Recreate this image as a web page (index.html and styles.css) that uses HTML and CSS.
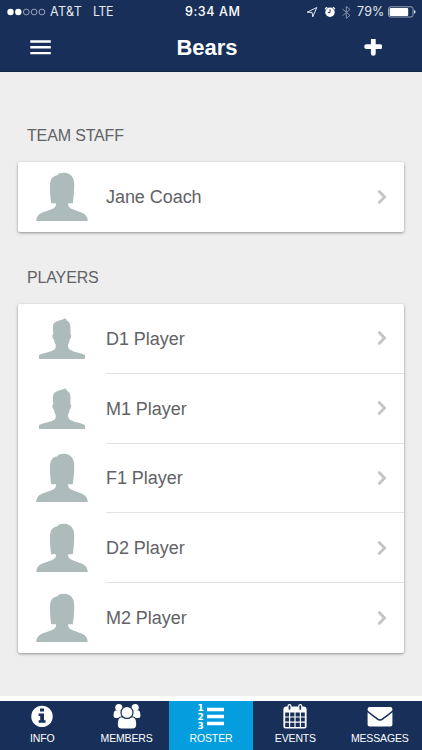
FILE: index.html
```html
<!DOCTYPE html>
<html lang="en">
<head>
<meta charset="utf-8">
<title>Bears</title>
<link rel="stylesheet" href="styles.css">
</head>
<body>
<svg class="defs" aria-hidden="true">
  <symbol id="female" viewBox="0 0 52 49"><path d="M15.2 31.2C14.6 27 14 22 14 14C14 7 16.5 4 21 3.4C22.5 1.3 25 .7 28 .8C35 1.2 38.1 5.5 38.2 12C38.4 19 37.5 26 36.8 31.2H32.1C32 35 34 36.3 37.3 37.5C43 40 51.6 40.5 51.8 49H.2C.3 40.5 9 40 15 37.5C18.2 36.3 20.2 35 20.1 31.2Z"/></symbol>
  <symbol id="male" viewBox="0 0 52 49"><path d="M17.3 20C16.5 11.6 16.8 9.7 20 7.8C23 5.8 26.5 6.3 29.5 4.3L30.8 6.6C34.3 8.3 34.9 11.6 34.4 20C35.9 20.6 35 24.9 33.6 25.7C33.2 28.1 32.6 29.4 32 30.5C31.8 33.4 32.7 35 34.5 36C38.5 38.2 44 38.7 49 41.1V45H3V41.1C8 38.7 13.8 38.2 17.8 36C19.5 35 20 33.4 19.6 30.5C18.8 29.4 18.4 28.1 18 25.7C16.5 24.9 15.8 20.6 17.3 20Z"/></symbol>
</svg>
<header class="header">
  <div class="status">
    <svg class="signal" viewBox="0 0 39 8"><g class="solid"><circle cx="3.5" cy="4" r="3.2"/><circle cx="11.3" cy="4" r="3.2"/></g><g class="ring"><circle cx="19.3" cy="4" r="2.9"/><circle cx="27.1" cy="4" r="2.9"/><circle cx="34.9" cy="4" r="2.9"/></g></svg>
    <span class="carrier">AT&amp;T</span>
    <span class="network">LTE</span>
    <time class="clock">9:34 AM</time>
    <svg class="indicators" viewBox="0 0 46 16"><path class="line" d="M1.2 8.2L10.8 3.5L6.8 12.8L6.1 8.5Z"/><circle class="solid" cx="24" cy="8.3" r="4.7"/><path class="thick" d="M19.4 4.8L20.8 3.6M28.6 4.8L27.2 3.6"/><path class="dark" d="M24 5.3V8.6H21.8"/><path class="dim" d="M36.5 5L44 11.3L40.3 14.4V2.4L44 5.5L36.5 11.8"/></svg>
    <span class="percent">79%</span>
    <svg class="battery" viewBox="0 0 28 12"><rect class="ring" x=".5" y=".8" width="24.5" height="10.2" rx="2"/><rect class="solid" x="1.6" y="1.9" width="18.6" height="8" rx="1"/><path class="solid" d="M26.1 4C28 4.5 28 7.3 26.1 7.8Z"/></svg>
  </div>
  <div class="title-bar">
    <svg class="menu" viewBox="0 0 21 16"><path d="M.3 1.5H20.8M.3 7.3H20.8M.3 13.1H20.8"/></svg>
    <h1>Bears</h1>
    <svg class="add" viewBox="0 0 18 18"><path d="M9.3 1V14.4M2.6 7.7H16"/></svg>
  </div>
</header>
<main>
  <h2>TEAM STAFF</h2>
  <ul class="card">
    <li><svg class="avatar"><use href="#female"/></svg><div class="entry">Jane Coach<svg class="chevron" viewBox="0 0 10 16"><path d="M1.5 1.8L7.6 8L1.5 14.2"/></svg></div></li>
  </ul>
  <h2>PLAYERS</h2>
  <ul class="card">
    <li><svg class="avatar"><use href="#male"/></svg><div class="entry">D1 Player<svg class="chevron" viewBox="0 0 10 16"><path d="M1.5 1.8L7.6 8L1.5 14.2"/></svg></div></li>
    <li><svg class="avatar"><use href="#male"/></svg><div class="entry">M1 Player<svg class="chevron" viewBox="0 0 10 16"><path d="M1.5 1.8L7.6 8L1.5 14.2"/></svg></div></li>
    <li><svg class="avatar"><use href="#female"/></svg><div class="entry">F1 Player<svg class="chevron" viewBox="0 0 10 16"><path d="M1.5 1.8L7.6 8L1.5 14.2"/></svg></div></li>
    <li><svg class="avatar"><use href="#female"/></svg><div class="entry">D2 Player<svg class="chevron" viewBox="0 0 10 16"><path d="M1.5 1.8L7.6 8L1.5 14.2"/></svg></div></li>
    <li><svg class="avatar"><use href="#female"/></svg><div class="entry">M2 Player<svg class="chevron" viewBox="0 0 10 16"><path d="M1.5 1.8L7.6 8L1.5 14.2"/></svg></div></li>
  </ul>
</main>
<nav class="tabs">
  <a class="tab"><svg viewBox="0 0 28 28"><circle class="solid" cx="14" cy="14.4" r="10.7"/><path class="cut" d="M12 6.5H16V9.5H12ZM10.6 11.6H16V18.2H17.6V20.7H10.6V18.2H12.2V14.1H10.6Z"/></svg><span>INFO</span></a>
  <a class="tab"><svg viewBox="0 0 28 28"><g class="solid"><circle cx="5.8" cy="5.5" r="3.6"/><circle cx="22.2" cy="5.5" r="3.6"/><path d="M3.2 8.4C.8 8.2 .6 11 .6 13.7C.6 15.3 1.5 16.1 3 16.1H8.5L10 9ZM24.8 8.4C27.2 8.2 27.4 11 27.4 13.7C27.4 15.3 26.5 16.1 25 16.1H19.5L18 9Z"/></g><path class="people" d="M9.3 14.8C5 14.3 4.2 18.5 4.2 22.8C4.2 25.5 5.7 27 8.3 27H19.7C22.3 27 23.8 25.5 23.8 22.8C23.8 18.5 23 14.3 18.7 14.8C16 16.8 12 16.8 9.3 14.8Z"/><circle class="people" cx="14" cy="10.4" r="6"/></svg><span>MEMBERS</span></a>
  <a class="tab active"><div class="list-icon"><div class="digits"><b>1</b><b>2</b><b>3</b></div><svg viewBox="0 0 17 28"><path class="bars" d="M0 7.5H17M0 14.5H17M0 21.5H17"/></svg></div><span>ROSTER</span></a>
  <a class="tab"><svg viewBox="0 0 28 28"><path class="solid" fill-rule="evenodd" d="M4.8 4.5H23.2Q25.6 4.5 25.6 7V24.6Q25.6 26.6 23.6 26.6H4.4Q2.4 26.6 2.4 24.6V7Q2.4 4.5 4.8 4.5ZM4.2 10.5V14.4H8V10.5ZM9.2 10.5V14.4H13.4V10.5ZM14.6 10.5V14.4H18.8V10.5ZM20 10.5V14.4H23.8V10.5ZM4.2 15.6V19.6H8V15.6ZM9.2 15.6V19.6H13.4V15.6ZM14.6 15.6V19.6H18.8V15.6ZM20 15.6V19.6H23.8V15.6ZM4.2 20.8V24.9H8V20.8ZM9.2 20.8V24.9H13.4V20.8ZM14.6 20.8V24.9H18.8V20.8ZM20 20.8V24.9H23.8V20.8Z"/><rect class="clip" x="7" y="2.7" width="3" height="5.7" rx="1.5"/><rect class="clip" x="17.8" y="2.7" width="3" height="5.7" rx="1.5"/></svg><span>EVENTS</span></a>
  <a class="tab"><svg viewBox="0 0 28 28"><rect class="solid" x="1.6" y="5.1" width="24.8" height="19.4" rx="2.1"/><path class="flap" d="M.8 8.5C4 11.8 8 14.5 11.2 16.9Q14 19 16.8 16.9C20 14.5 24 11.8 27.2 8.5"/></svg><span>MESSAGES</span></a>
</nav>
</body>
</html>
```
FILE: styles.css
```css
* { box-sizing: border-box; }
body {
  margin: 0;
  width: 422px;
  height: 750px;
  display: flex;
  flex-direction: column;
  overflow: hidden;
  background: #eee;
  color: #626266;
  font-family: "Liberation Sans", Arial, sans-serif;
}
svg { display: block; flex: none; }
h1, h2, ul { margin: 0; padding: 0; }
.defs { display: none; }
.solid { fill: #fff; }

.header {
  height: 72px;
  flex: none;
  background: #172f59;
  border-bottom: 1px solid #122648;
  color: #fff;
}
.status {
  height: 24px;
  display: flex;
  align-items: center;
  padding-left: 7px;
  font: 12.5px/24px Inter, sans-serif;
  white-space: nowrap;
}
.status .ring { fill: none; stroke: #b9c1d0; stroke-width: .8; }
.signal { width: 39px; height: 8px; }
.carrier { width: 42px; padding-left: 4px; letter-spacing: .4px; color: #e5e8ee; }
.network { width: 97px; padding-left: 5px; letter-spacing: -.5px; color: #e5e8ee; }
.clock { width: 121px; font-weight: 500; letter-spacing: .6px; }
.indicators { width: 46px; height: 16px; }
.indicators path { fill: none; }
.indicators .line { stroke: #e5e8ee; stroke-width: 1; stroke-linejoin: round; }
.indicators .thick { stroke: #fff; stroke-width: 1.3; stroke-linecap: round; }
.indicators .dark { stroke: #172f59; stroke-width: 1; }
.indicators .dim { stroke: #8290aa; stroke-width: 1; }
.percent { width: 30px; padding-left: 5px; margin-right: 6px; letter-spacing: .2px; color: #e5e8ee; }
.battery { width: 28px; height: 12px; }
.title-bar {
  height: 47px;
  padding: 0 40px 0 30px;
  display: flex;
  align-items: center;
  justify-content: space-between;
}
.title-bar h1 { font-size: 22px; line-height: 46px; margin-right: 1px; }
.menu { width: 21px; height: 16px; stroke: #fff; stroke-width: 2.4; }
.add { width: 18px; height: 18px; stroke: #fff; stroke-width: 4.8; stroke-linecap: round; }

main { flex: 1; }
h2 { padding: 1px 0 0 27px; font-size: 16px; font-weight: 400; line-height: 20px; letter-spacing: -.15px; }
h2:first-child { margin-top: 53px; }
.card {
  margin: 16.4px 18px 34.4px;
  list-style: none;
  background: #fff;
  border-radius: 2px;
  box-shadow: 0 1px 3px rgba(0, 0, 0, .4);
}
.card li { display: flex; height: 69.8px; padding-left: 18px; }
.avatar { width: 52px; height: 49px; margin-top: 9.8px; fill: #adbbba; }
.entry {
  flex: 1;
  display: flex;
  align-items: center;
  justify-content: space-between;
  margin-left: 18px;
  padding: 2px 17.5px 0 0;
  border-bottom: 1px solid #e3e3e3;
  font-size: 18px;
  letter-spacing: -.05px;
}
.card li:last-child .entry { border-bottom-color: transparent; }
.chevron { width: 10px; height: 16px; margin-bottom: 2px; fill: none; stroke: #c4c4c8; stroke-width: 2.8; }

.tabs {
  height: 54px;
  flex: none;
  display: grid;
  grid-template-columns: repeat(5, 1fr);
  border-top: 5px solid #fff;
}
.tab {
  display: flex;
  flex-direction: column;
  align-items: center;
  background: #172f59;
  color: #fff;
  font-size: 10.5px;
  line-height: 14px;
  letter-spacing: -.15px;
}
.tab > svg { width: 28px; height: 28px; margin: 1px 0; }
.active { background: #049dde; }
.cut { fill: #172f59; }
.people { fill: #fff; stroke: #172f59; stroke-width: 1.2; }
.list-icon { display: flex; gap: 3px; height: 28px; margin: 1px 0; }
.list-icon svg { width: 17px; height: 28px; }
.bars { stroke: #fff; stroke-width: 3.5; }
.digits { width: 7px; padding-top: 2px; }
.digits b { display: block; font: bold 9px/9px "DejaVu Sans", sans-serif; letter-spacing: 0; }
.clip { fill: #172f59; stroke: #fff; stroke-width: 1.2; }
.flap { fill: none; stroke: #172f59; stroke-width: 1.6; }
```
